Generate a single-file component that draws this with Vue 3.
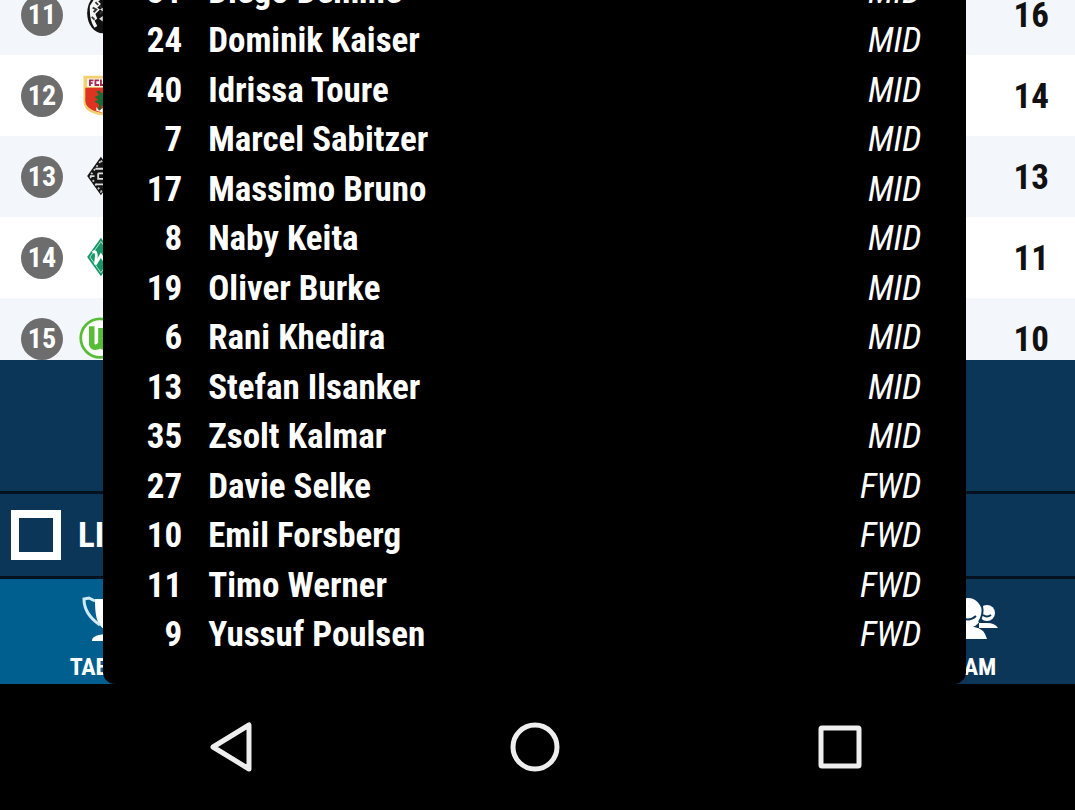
<script setup>
const standings = [
  { pos: 11, club: 'freiburg', points: 16 },
  { pos: 12, club: 'augsburg', points: 14 },
  { pos: 13, club: 'gladbach', points: 13 },
  { pos: 14, club: 'bremen', points: 11 },
  { pos: 15, club: 'wolfsburg', points: 10 },
]
const players = [
  [31, 'Diego Demme', 'MID'],
  [24, 'Dominik Kaiser', 'MID'],
  [40, 'Idrissa Toure', 'MID'],
  [7, 'Marcel Sabitzer', 'MID'],
  [17, 'Massimo Bruno', 'MID'],
  [8, 'Naby Keita', 'MID'],
  [19, 'Oliver Burke', 'MID'],
  [6, 'Rani Khedira', 'MID'],
  [13, 'Stefan Ilsanker', 'MID'],
  [35, 'Zsolt Kalmar', 'MID'],
  [27, 'Davie Selke', 'FWD'],
  [10, 'Emil Forsberg', 'FWD'],
  [11, 'Timo Werner', 'FWD'],
  [9, 'Yussuf Poulsen', 'FWD'],
]
</script>

<template>
  <div class="screen">
    <main class="app">
      <section class="standings">
        <table class="league">
          <tbody>
            <tr v-for="row in standings" :key="row.pos">
              <td class="pos"><span>{{ row.pos }}</span></td>
              <td class="club">
                <svg v-if="row.club === 'freiburg'" viewBox="0 0 48 48" aria-hidden="true">
                  <ellipse cx="27" cy="22" rx="17" ry="22" fill="#111" />
                  <path d="M13 14l5-8 6-3 3 3-5 3 3 3-4 4 3 2-5 5 2 5-3 2 3 6-3 2q-6-8-5-24z" fill="#f4f4f4" />
                  <path d="M16 16l4 2-3 3M19 10l3 3M15 26l3 3M24 14l3 5-3 4" stroke="#333" stroke-width="2" fill="none" />
                  <path d="M24 18l3-2v4zM23 28l4-3v6z" fill="#ddd" />
                </svg>
                <svg v-else-if="row.club === 'augsburg'" viewBox="0 0 48 48" aria-hidden="true">
                  <path d="M6 2h38v28q0 12-19 15Q6 42 6 30z" fill="#f5cf70" />
                  <path d="M10 5h30v9H10z" fill="#fff" />
                  <path d="M8 15h34v14q0 10-17 13Q8 39 8 29z" fill="#dc3420" />
                  <path d="M23 18l3 3 4 0v14h-5l1 4h-4l1-6-5-3 4-2-4-3 5-2-3-4z" fill="#1c6b34" />
                  <path d="M20 36l3 4 4-3v5l-7-2z" fill="#fff" />
                  <path d="M13 6v7M13 7h4M13 10h3M23 7h-4v5h4M25 6v6h4" stroke="#a8284c" stroke-width="2" fill="none" />
                </svg>
                <svg v-else-if="row.club === 'gladbach'" viewBox="0 0 48 48" aria-hidden="true">
                  <path d="M25 2L40 23 25 44 10 23z" fill="#151515" />
                  <path d="M25 6L37 23 25 40 13 23z" fill="none" stroke="#ccc" stroke-width="2" stroke-dasharray="2 3" />
                  <path d="M19 15h12M19 32h12M13 23h5M22 20v7M22 20h8M23 26h6" stroke="#ddd" stroke-width="2" fill="none" />
                </svg>
                <svg v-else-if="row.club === 'bremen'" viewBox="0 0 48 48" aria-hidden="true">
                  <path d="M25 2L40 23 25 44 10 23z" fill="#16976a" />
                  <path d="M25 6L37 23 25 40 13 23z" fill="none" stroke="#bfe8d8" stroke-width="1" />
                  <path d="M16 18q4-3 4 4l-1 9 6-10 6 10 4-13" fill="none" stroke="#fff" stroke-width="3" />
                </svg>
                <svg v-else viewBox="0 0 48 48" aria-hidden="true">
                  <circle cx="24" cy="23" r="22" fill="#fff" />
                  <circle cx="24" cy="23" r="21" fill="none" stroke="#58bd36" stroke-width="3" />
                  <path d="M15 10v19q0 4 4 4t6-4V12v17q0 4 4 4t6-4V10" fill="none" stroke="#58bd36" stroke-width="6" />
                </svg>
              </td>
              <td class="points">{{ row.points }}</td>
            </tr>
          </tbody>
        </table>
      </section>
      <div class="filler"></div>
      <label class="live"><input type="checkbox" /><span>LIVE</span></label>
      <nav class="tabs">
        <button class="tab active" type="button">
          <svg viewBox="0 0 52 48" aria-hidden="true">
            <path d="M13 4h26c0 15-1 25-10 31v4c5 1 7 3 7 7H10c0-4 4-6 13-7v-4C14 29 13 19 13 4z" fill="#fff" />
            <path d="M13 6L7 3 2 4c0 10 4 18 16 26M39 6l6-3 5 1c0 10-4 18-16 26" fill="none" stroke="#cfeaf7" stroke-width="3" />
          </svg>
          <span>TABLES</span>
        </button>
        <button class="tab" type="button">
          <svg viewBox="0 0 60 48" aria-hidden="true">
            <g fill="#fff">
              <circle cx="11" cy="19" r="7" />
              <path d="M0 33q3-6 8-6h8v6z" />
              <circle cx="49" cy="18" r="8" />
              <path d="M41 33v-5h8q8 0 11 5z" />
              <ellipse cx="30" cy="18" rx="14" ry="15" />
              <path d="M11 44q3-11 13-12h12q10 1 13 12z" />
            </g>
            <path d="M22 21q8 7 16 0M45 20q4 3 8 0M44 11q2 8-3 16" fill="none" stroke="#0b3658" stroke-width="2" />
          </svg>
          <span>TEAM</span>
        </button>
      </nav>
      <section class="squad" aria-label="Squad">
        <table>
          <tbody>
            <tr v-for="[no, name, role] in players" :key="no">
              <td class="no">{{ no }}</td>
              <td class="name">{{ name }}</td>
              <td class="role">{{ role }}</td>
            </tr>
          </tbody>
        </table>
      </section>
    </main>
    <footer class="system">
      <button type="button" aria-label="Back">
        <svg viewBox="0 0 56 56"><path d="M46 6V50L10 28z" /></svg>
      </button>
      <button type="button" aria-label="Home">
        <svg viewBox="0 0 56 56"><circle cx="28" cy="28" r="22" /></svg>
      </button>
      <button type="button" aria-label="Recent apps">
        <svg viewBox="0 0 56 56"><rect x="9" y="9" width="38" height="38" rx="1" /></svg>
      </button>
    </footer>
  </div>
</template>

<style>
body {
  margin: 0;
  background: #000;
}
</style>

<style scoped>
.screen {
  display: flex;
  flex-direction: column;
  min-height: 100vh;
  overflow: hidden;
  background: #000;
  color: #fff;
  font-family: 'Roboto Condensed', 'Liberation Sans Narrow', Roboto, sans-serif;
  font-weight: 700;
}
.app {
  position: relative;
  flex: 1;
  display: flex;
  flex-direction: column;
  background: #0b3658;
}
.standings {
  display: flex;
  flex-direction: column;
  justify-content: flex-start;
  height: 360px;
  overflow: hidden;
  background: #fff;
}
table {
  width: 100%;
  border-collapse: collapse;
}
td {
  padding: 0;
}
.league {
  margin-top: -26px;
  color: #111;
  font-size: 35px;
}
.league tr {
  height: 81px;
}
.league tr:nth-child(odd) {
  background: #f3f6fb;
}
.pos {
  width: 78px;
}
.pos span {
  display: block;
  width: 42px;
  margin-left: 21px;
  border-radius: 50%;
  background: #6d6d6d;
  color: #fff;
  font-size: 28px;
  line-height: 42px;
  text-align: center;
}
.club svg {
  display: block;
  width: 44px;
  height: 44px;
}
.points {
  padding-top: 2px;
  padding-right: 26px;
  text-align: right;
}
.filler {
  flex: 1;
}
.live {
  display: flex;
  align-items: center;
  gap: 17px;
  height: 82px;
  padding-left: 11px;
  border-top: 3px solid #04111f;
  border-bottom: 3px solid #04111f;
  font-size: 35px;
}
.live input {
  appearance: none;
  box-sizing: border-box;
  width: 50px;
  height: 50px;
  margin: 0;
  border: 8px solid #fff;
}
.tabs {
  display: flex;
  justify-content: space-between;
  height: 105px;
}
.tab {
  display: flex;
  flex-direction: column;
  align-items: center;
  justify-content: flex-end;
  gap: 10px;
  width: 20%;
  padding: 0 0 3px;
  border: 0;
  background: none;
  color: #fff;
  font: inherit;
  font-size: 24px;
  line-height: 28px;
}
.tab.active {
  background: #005f8f;
}
.tab svg {
  height: 48px;
}
.squad {
  position: absolute;
  inset: 0 10.1% 0 9.6%;
  display: flex;
  flex-direction: column;
  justify-content: flex-end;
  overflow: hidden;
  padding: 0 45px 24px 38px;
  border-radius: 0 0 12px 12px;
  background: #000;
}
.squad table {
  flex: none;
  height: 693px;
  font-size: 35px;
  line-height: 44px;
}
.no {
  width: 41px;
  text-align: right;
}
.name {
  padding-left: 26px;
}
.role {
  font-style: italic;
  font-weight: 400;
  text-align: right;
}
.system {
  display: flex;
  align-items: center;
  justify-content: space-between;
  height: 126px;
  padding: 0 19.3% 0 18.9%;
}
.system button {
  padding: 0;
  border: 0;
  background: none;
}
.system svg {
  display: block;
  width: 56px;
  fill: none;
  stroke: #eee;
  stroke-width: 5;
  stroke-linejoin: round;
}
</style>
